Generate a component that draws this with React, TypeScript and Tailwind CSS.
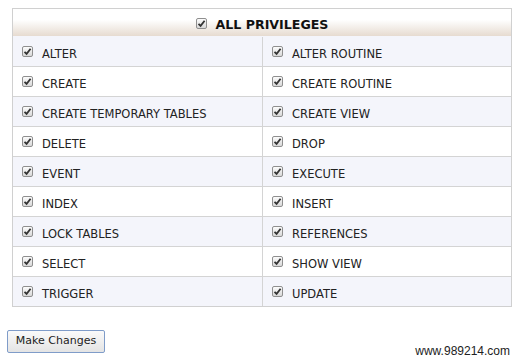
const rows: Array<[string, string]> = [
  ["ALTER", "ALTER ROUTINE"],
  ["CREATE", "CREATE ROUTINE"],
  ["CREATE TEMPORARY TABLES", "CREATE VIEW"],
  ["DELETE", "DROP"],
  ["EVENT", "EXECUTE"],
  ["INDEX", "INSERT"],
  ["LOCK TABLES", "REFERENCES"],
  ["SELECT", "SHOW VIEW"],
  ["TRIGGER", "UPDATE"],
];

function Check({ className = "" }: { className?: string }) {
  return (
    <span
      className={`inline-flex h-[11px] w-[11px] shrink-0 items-center justify-center rounded-[2px] border border-[#8f8f8f] bg-gradient-to-b from-[#fcfcfc] to-[#d8d8d8] ${className}`}
    >
      <svg width="9" height="9" viewBox="0 0 9 9">
        <path d="M1.5 4.8 L3.6 6.9 L7.6 1.8" fill="none" stroke="#333" strokeWidth="1.8" />
      </svg>
    </span>
  );
}

function Cell({ label, first }: { label: string; first?: boolean }) {
  return (
    <div
      className={`flex h-full items-start gap-[9px] pl-[9px] ${
        first ? "border-r border-[#d4d4d4]" : ""
      }`}
    >
      <Check className="mt-[9px]" />
      <span className="mt-[9px] text-[11.5px] text-[#222]">{label}</span>
    </div>
  );
}

export default function App() {
  return (
    <div className="relative h-[361px] w-[523px] bg-white font-['DejaVu_Sans',Verdana,sans-serif]">
      <div className="pl-[12px] pt-[8px]">
        <div className="w-[500px] border border-[#d0d0d0]">
          <div className="flex h-[27px] items-start justify-center gap-[9px] bg-gradient-to-b from-white from-40% to-[#e6dbd0]">
            <Check className="mt-[9px]" />
            <span className="mt-[7px] text-[12.6px] font-bold text-[#111]">ALL PRIVILEGES</span>
          </div>
          {rows.map(([a, b], i) => (
            <div
              key={a}
              className={`grid h-[30px] grid-cols-[250px_1fr] border-t ${
                i % 2 === 0 ? "bg-[#f4f5fb]" : "bg-white"
              } ${i === 0 ? "border-transparent" : "border-[#d4d4d4]"}`}
            >
              <Cell label={a} first />
              <Cell label={b} />
            </div>
          ))}
        </div>
      </div>
      <div className="flex pl-[7px] pt-[23px]">
        <button className="h-[23px] w-[98px] rounded-[2px] border border-[#7f9cc9] bg-gradient-to-b from-[#fafafa] to-[#e4e4e4] text-[11px] text-[#222]">
          Make Changes
        </button>
      </div>
      <div className="absolute bottom-[1px] right-[13px] font-['Liberation_Sans',Arial,sans-serif] text-[12px] text-[#222]">
        www.989214.com
      </div>
    </div>
  );
}
